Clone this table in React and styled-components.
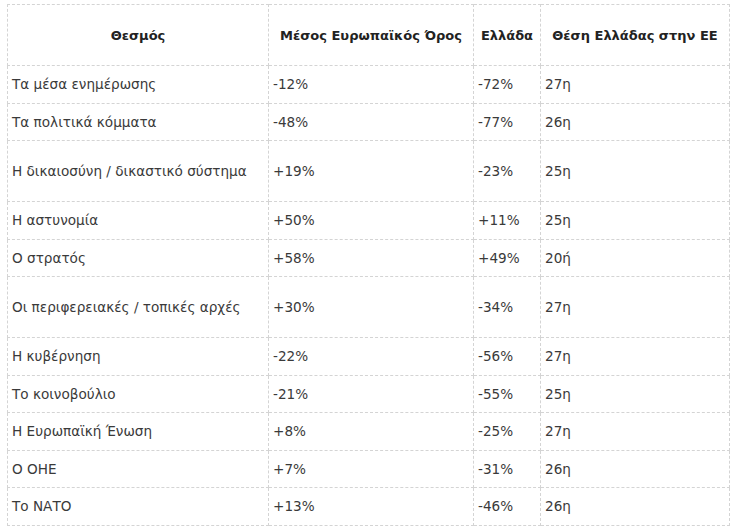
import React from 'react';
import styled, { createGlobalStyle } from 'styled-components';

const GlobalStyle = createGlobalStyle`
  body {
    margin: 0;
    background: #fff;
  }
`;

// Trust in institutions, EU average vs Greece
const rows = [
  { name: 'Τα μέσα ενημέρωσης', eu: '-12%', gr: '-72%', rank: '27η' },
  { name: 'Τα πολιτικά κόμματα', eu: '-48%', gr: '-77%', rank: '26η' },
  { name: 'Η δικαιοσύνη / δικαστικό σύστημα', eu: '+19%', gr: '-23%', rank: '25η', tall: true },
  { name: 'Η αστυνομία', eu: '+50%', gr: '+11%', rank: '25η' },
  { name: 'Ο στρατός', eu: '+58%', gr: '+49%', rank: '20ή' },
  { name: 'Οι περιφερειακές / τοπικές αρχές', eu: '+30%', gr: '-34%', rank: '27η', tall: true },
  { name: 'Η κυβέρνηση', eu: '-22%', gr: '-56%', rank: '27η' },
  { name: 'Το κοινοβούλιο', eu: '-21%', gr: '-55%', rank: '25η' },
  { name: 'Η Ευρωπαϊκή Ένωση', eu: '+8%', gr: '-25%', rank: '27η' },
  { name: 'Ο ΟΗΕ', eu: '+7%', gr: '-31%', rank: '26η' },
  { name: 'Το ΝΑΤΟ', eu: '+13%', gr: '-46%', rank: '26η' }
];

const Page = styled.div`
  padding: 4px 5px 0 7px;
  font-family: 'DejaVu Sans', 'Liberation Sans', sans-serif;
`;

const Table = styled.table`
  width: 722px;
  border-collapse: collapse;
  table-layout: fixed;
  color: #3a3a3a;
  font-size: 13.6px;
`;

const Row = styled.tr`
  height: ${({ tall }) => (tall ? '61px' : '37.5px')};
`;

const Head = styled.th`
  border: 1px dashed #d4d4d4;
  padding: 0 4px;
  font-size: 13px;
  font-weight: bold;
  text-align: center;
  color: #222;
`;

const Cell = styled.td`
  border: 1px dashed #d4d4d4;
  padding: 0 4px;
  text-align: left;
  white-space: nowrap;
`;

const App = () => (
  <Page>
    <GlobalStyle />
    <Table>
      <colgroup>
        <col style={{ width: 261 }} />
        <col style={{ width: 205 }} />
        <col style={{ width: 67 }} />
        <col style={{ width: 189 }} />
      </colgroup>
      <thead>
        <Row tall>
          <Head>Θεσμός</Head>
          <Head>Μέσος Ευρωπαϊκός Όρος</Head>
          <Head>Ελλάδα</Head>
          <Head>Θέση Ελλάδας στην ΕΕ</Head>
        </Row>
      </thead>
      <tbody>
        {rows.map((r) => (
          <Row key={r.name} tall={r.tall}>
            <Cell>{r.name}</Cell>
            <Cell>{r.eu}</Cell>
            <Cell>{r.gr}</Cell>
            <Cell>{r.rank}</Cell>
          </Row>
        ))}
      </tbody>
    </Table>
  </Page>
);

export default App;
